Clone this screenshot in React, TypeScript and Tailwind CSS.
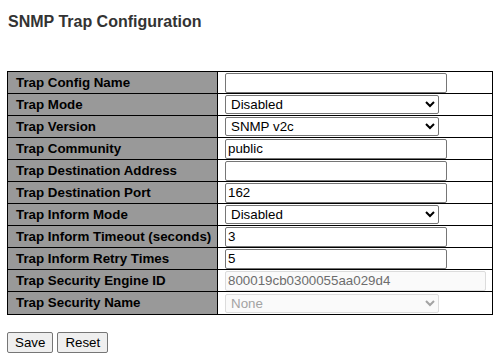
import React from "react";

type Row =
  | { label: string; kind: "text"; value: string }
  | { label: string; kind: "select"; value: string; options: string[] }
  | { label: string; kind: "ro"; value: string }
  | { label: string; kind: "dsel"; value: string };

const rows: Row[] = [
  { label: "Trap Config Name", kind: "text", value: "" },
  { label: "Trap Mode", kind: "select", value: "Disabled", options: ["Disabled", "Enabled"] },
  { label: "Trap Version", kind: "select", value: "SNMP v2c", options: ["SNMP v1", "SNMP v2c", "SNMP v3"] },
  { label: "Trap Community", kind: "text", value: "public" },
  { label: "Trap Destination Address", kind: "text", value: "" },
  { label: "Trap Destination Port", kind: "text", value: "162" },
  { label: "Trap Inform Mode", kind: "select", value: "Disabled", options: ["Disabled", "Enabled"] },
  { label: "Trap Inform Timeout (seconds)", kind: "text", value: "3" },
  { label: "Trap Inform Retry Times", kind: "text", value: "5" },
  { label: "Trap Security Engine ID", kind: "ro", value: "800019cb0300055aa029d4" },
  { label: "Trap Security Name", kind: "dsel", value: "None" },
];

function Field({ row }: { row: Row }) {
  if (row.kind === "text") {
    return (
      <input
        type="text"
        defaultValue={row.value}
        className="w-[222px] h-[20px] border border-[#767676] rounded-[2px] bg-white px-[2px] text-[13.333px] text-black outline-none"
      />
    );
  }
  if (row.kind === "select") {
    return (
      <select
        defaultValue={row.value}
        className="w-[214px] h-[19px] border border-[#767676] rounded-[2px] bg-white pl-[1px] text-[13.333px] text-black outline-none"
      >
        {row.options.map((o) => (
          <option key={o}>{o}</option>
        ))}
      </select>
    );
  }
  if (row.kind === "ro") {
    return (
      <input
        type="text"
        readOnly
        defaultValue={row.value}
        className="w-[261px] h-[20px] border border-[#dcdcdc] rounded-[2px] bg-[#fafafa] px-[2px] text-[13.333px] text-[#6d6d6d] outline-none"
      />
    );
  }
  return (
    <select
      disabled
      defaultValue={row.value}
      className="w-[214px] h-[19px] border border-[#dcdcdc] rounded-[2px] bg-[#fafafa] pl-[1px] text-[13.333px] text-[#a3a3a3] outline-none"
    >
      <option>None</option>
    </select>
  );
}

export default function App() {
  return (
    <div
      className="min-h-[361px] bg-white pl-[7px] pt-[13px]"
      style={{ fontFamily: '"Liberation Sans", Arial, sans-serif' }}
    >
      <h1 className="pl-[1px] text-[16px] leading-[18px] font-bold text-[#333]">
        SNMP Trap Configuration
      </h1>
      <div className="mt-[40px] w-[486px] border border-black">
        {rows.map((row, i) => (
          <div
            key={row.label}
            className={`flex h-[22px] ${i < rows.length - 1 ? "border-b border-black" : ""}`}
          >
            <div className="w-[210px] shrink-0 border-r border-black bg-[#999999] pl-[8px] flex items-center text-[13.333px] font-bold text-black whitespace-nowrap">
              {row.label}
            </div>
            <div className="flex-1 pl-[7px] flex items-center">
              <Field row={row} />
            </div>
          </div>
        ))}
      </div>
      <div className="mt-[17px] flex gap-[4px]">
        <button className="h-[21px] px-[7px] border border-[#767676] rounded-[2px] bg-[#efefef] text-[13.333px] text-black">
          Save
        </button>
        <button className="h-[21px] px-[7px] border border-[#767676] rounded-[2px] bg-[#efefef] text-[13.333px] text-black">
          Reset
        </button>
      </div>
    </div>
  );
}
